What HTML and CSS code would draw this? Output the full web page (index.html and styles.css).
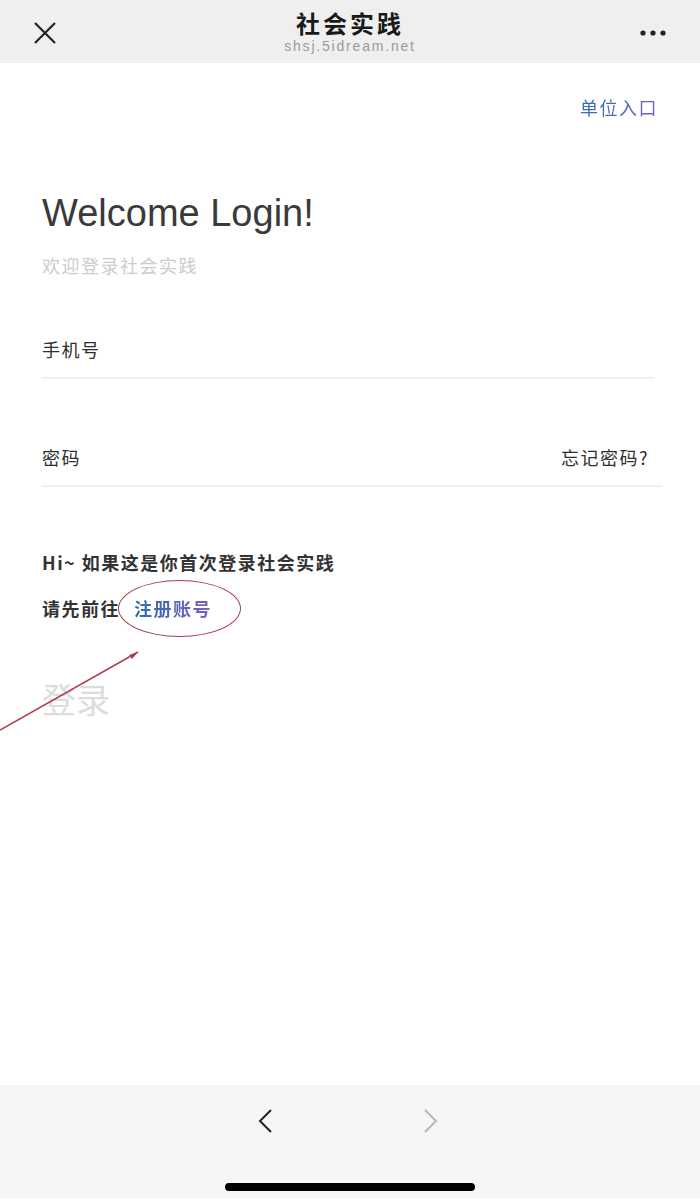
FILE: index.html
```html
<!DOCTYPE html>
<html lang="zh-CN">
<head>
    <meta charset="UTF-8">
    <meta name="viewport" content="width=device-width, initial-scale=1.0">
    <title>社会实践</title>
    <link rel="stylesheet" href="styles.css">
</head>
<body>
    <header class="topbar">
        <span class="close">
            <svg width="24" height="24" viewBox="0 0 24 24"><path d="M2 2 L22 22 M22 2 L2 22" stroke="#222" stroke-width="2.2" fill="none"/></svg>
        </span>
        <div class="title-box">
            <div class="title">社会实践</div>
            <div class="url">shsj.5idream.net</div>
        </div>
        <span class="more">
            <svg width="28" height="8" viewBox="0 0 28 8"><circle cx="4" cy="4" r="2.6" fill="#222"/><circle cx="14" cy="4" r="2.6" fill="#222"/><circle cx="24" cy="4" r="2.6" fill="#222"/></svg>
        </span>
    </header>

    <main class="page">
        <div class="unit-row"><a class="unit-link grad" href="#">单位入口</a></div>

        <h1 class="welcome">Welcome Login!</h1>
        <p class="welcome-sub">欢迎登录社会实践</p>

        <div class="field field-phone">
            <span class="label">手机号</span>
        </div>
        <div class="field field-pwd">
            <span class="label">密码</span>
            <a class="forgot" href="#">忘记密码?</a>
        </div>

        <p class="hint">Hi~ 如果这是你首次登录社会实践</p>
        <p class="hint hint-reg">请先前往<a class="reg-link grad" href="#">注册账号</a>
            <span class="circle"></span>
        </p>

        <div class="login-btn">登录</div>

        <!-- annotation arrow drawn over the page -->
        <svg class="arrow" width="150" height="90" viewBox="0 0 150 90">
            <path d="M0 86 L138 8" stroke="#b33a4a" stroke-width="1.5" fill="none"/>
            <path d="M138 8 L129 11 L132 15 Z" fill="#b33a4a"/>
        </svg>
    </main>

    <footer class="bottombar">
        <div class="nav-arrows">
            <svg width="20" height="26" viewBox="0 0 20 26"><path d="M15 2 L4 13 L15 24" stroke="#222" stroke-width="2" fill="none"/></svg>
            <svg width="20" height="26" viewBox="0 0 20 26"><path d="M5 2 L16 13 L5 24" stroke="#b8b8b8" stroke-width="2" fill="none"/></svg>
        </div>
        <div class="home-bar"></div>
    </footer>
</body>
</html>
```

FILE: styles.css
```css
:root {
    --text: #2e2e2e;
    --muted: #cccccc;
    --line: #f0f0f0;
    --bar: #efefef;
}

* {
    box-sizing: border-box;
}

body {
    margin: 0;
    width: 700px;
    height: 1203px;
    display: flex;
    flex-direction: column;
    font-family: "Noto Sans CJK SC", "Liberation Sans", sans-serif;
    color: var(--text);
    background-color: #ffffff;
}

a {
    text-decoration: none;
}

.grad {
    background: linear-gradient(90deg, #2f6db0, #7a5ec2);
    -webkit-background-clip: text;
    background-clip: text;
    color: transparent;
}

/* top bar */
.topbar {
    height: 63px;
    background-color: var(--bar);
    display: flex;
    align-items: center;
    justify-content: space-between;
    padding: 0 33px;
}

.close,
.more {
    display: flex;
    align-items: center;
    width: 40px;
    margin-top: 2px;
}

.more {
    justify-content: flex-end;
}

.title-box {
    text-align: center;
}

.title {
    font-size: 24px;
    font-weight: bold;
    line-height: 28px;
    letter-spacing: 3px;
    color: #1a1a1a;
}

.url {
    margin-top: 1px;
    font-family: "Liberation Sans", sans-serif;
    font-size: 14px;
    line-height: 16px;
    letter-spacing: 1.8px;
    color: #9a9a9a;
}

/* page */
.page {
    flex: 1;
    position: relative;
    padding: 0 42px;
    font-size: 18px;
    letter-spacing: 1.5px;
}

.unit-row {
    display: flex;
    justify-content: flex-end;
    padding: 32px 0 0 0;
}

.unit-link {
    line-height: 24px;
}

.welcome {
    margin: 71px 0 0;
    font-family: "Liberation Sans", sans-serif;
    font-weight: normal;
    font-size: 38px;
    line-height: 46px;
    letter-spacing: 0;
    color: #3a3a3a;
}

.welcome-sub {
    margin: 17px 0 0;
    line-height: 24px;
    color: var(--muted);
}

.field {
    display: flex;
    justify-content: space-between;
    align-items: center;
    line-height: 24px;
    padding-bottom: 16px;
    border-bottom: 2px solid var(--line);
}

.field-phone {
    margin-top: 60px;
    margin-right: 4px;
}

.field-pwd {
    margin-top: 66px;
    margin-right: -4px;
}

.forgot {
    color: var(--text);
    margin-right: 13px;
}

.hint {
    margin: 63px 0 0;
    line-height: 24px;
    font-weight: bold;
    color: #333333;
}

.hint-reg {
    margin-top: 22px;
    position: relative;
    display: inline-block;
}

.reg-link {
    margin-left: 14px;
}

.circle {
    position: absolute;
    left: 76px;
    top: -16px;
    width: 123px;
    height: 57px;
    border: 1.5px solid #a7404c;
    border-radius: 50%;
}

.login-btn {
    margin-top: 58px;
    font-size: 34px;
    line-height: 40px;
    letter-spacing: 0;
    color: #dcdcdc;
}

.arrow {
    position: absolute;
    left: 0;
    top: 581px;
}

/* bottom toolbar */
.bottombar {
    height: 113px;
    background-color: #f6f6f6;
    display: flex;
    flex-direction: column;
    align-items: center;
    margin-bottom: 5px;
}

.nav-arrows {
    display: flex;
    gap: 144px;
    margin-top: 23px;
    margin-right: 4px;
}

.home-bar {
    margin-top: 49px;
    width: 250px;
    height: 8px;
    border-radius: 4px;
    background-color: #000000;
}
```
